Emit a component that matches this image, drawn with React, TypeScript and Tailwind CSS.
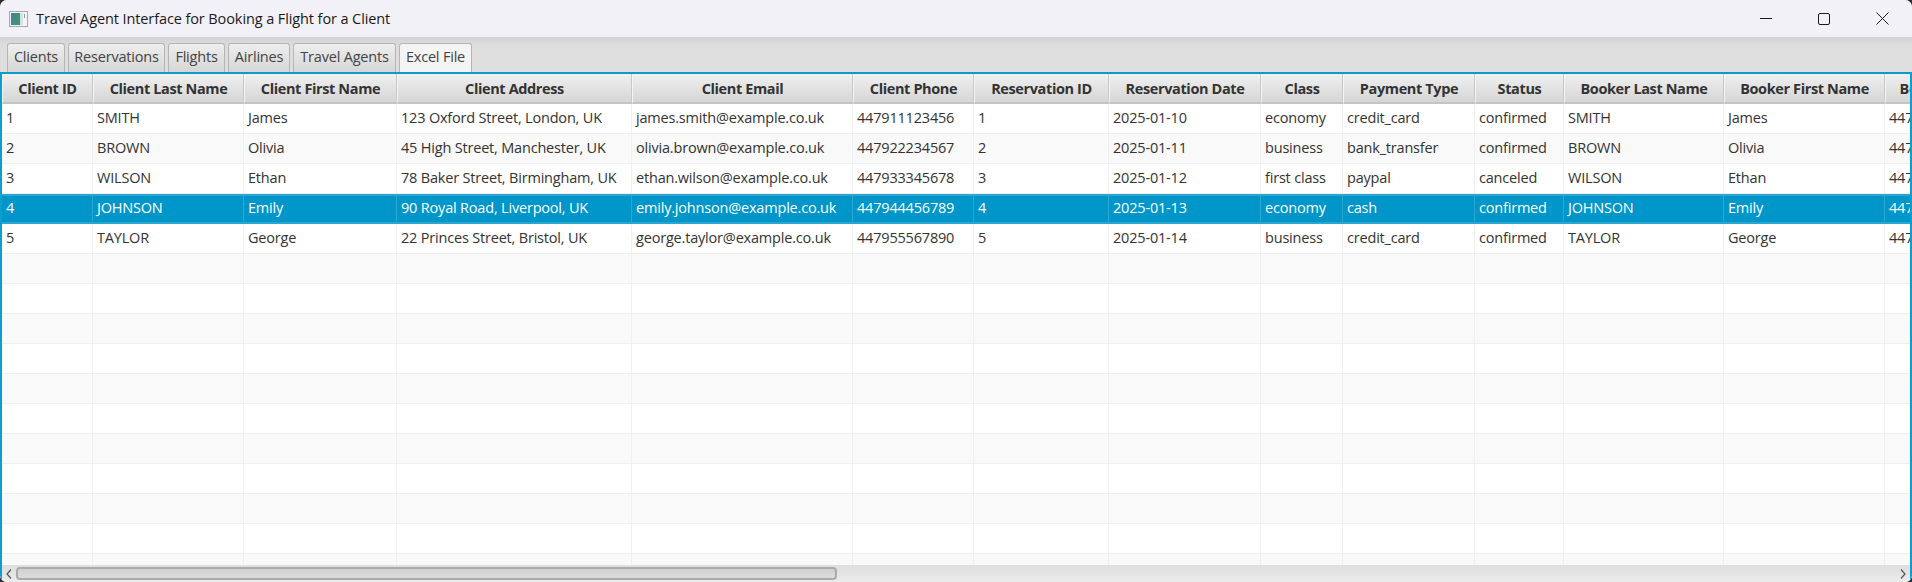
import React from "react";

const headers = ["Client ID","Client Last Name","Client First Name","Client Address","Client Email","Client Phone","Reservation ID","Reservation Date","Class","Payment Type","Status","Booker Last Name","Booker First Name","Booker Phone"];
const data = [
  ["1","SMITH","James","123 Oxford Street, London, UK","james.smith@example.co.uk","447911123456","1","2025-01-10","economy","credit_card","confirmed","SMITH","James","447911123456"],
  ["2","BROWN","Olivia","45 High Street, Manchester, UK","olivia.brown@example.co.uk","447922234567","2","2025-01-11","business","bank_transfer","confirmed","BROWN","Olivia","447922234567"],
  ["3","WILSON","Ethan","78 Baker Street, Birmingham, UK","ethan.wilson@example.co.uk","447933345678","3","2025-01-12","first class","paypal","canceled","WILSON","Ethan","447933345678"],
  ["4","JOHNSON","Emily","90 Royal Road, Liverpool, UK","emily.johnson@example.co.uk","447944456789","4","2025-01-13","economy","cash","confirmed","JOHNSON","Emily","447944456789"],
  ["5","TAYLOR","George","22 Princes Street, Bristol, UK","george.taylor@example.co.uk","447955567890","5","2025-01-14","business","credit_card","confirmed","TAYLOR","George","447955567890"],
];
const tabs = [
  ["Clients","w-[58px]"],["Reservations","w-[97px]"],["Flights","w-[57px]"],["Airlines","w-[62px]"],["Travel Agents","w-[103px]"],
];
const grid = "grid grid-cols-[91px_151px_153px_235px_221px_121px_135px_152px_82px_132px_89px_160px_161px_126px] w-max";
const rows = Array.from({ length: 16 }, (_, i) => data[i] ?? Array(14).fill(""));

function WinIcon() {
  return (
    <svg width="20" height="16" viewBox="0 0 20 16" className="shrink-0">
      <defs>
        <linearGradient id="g" x1="0" y1="0" x2="1" y2="1">
          <stop offset="0" stopColor="#4a7f98" />
          <stop offset="1" stopColor="#3a9a70" />
        </linearGradient>
      </defs>
      <rect x="0.5" y="0.5" width="18" height="15" fill="#f4f4f4" stroke="#a8a8a8" />
      <rect x="2" y="2" width="9" height="12" fill="url(#g)" />
      <rect x="11" y="2" width="3" height="12" fill="#d5e3df" />
      <rect x="15" y="3" width="1" height="4" fill="#7fa6ae" />
    </svg>
  );
}

export default function App() {
  return (
    <div className="w-[1912px] h-[582px] bg-[#2c2c2c] overflow-hidden font-['Open_Sans',sans-serif]">
      <div className="w-full h-full rounded-[7px] overflow-hidden flex flex-col bg-[#dcdcdc]">
        {/* title bar */}
        <div className="h-[37px] bg-[#f2f1f7] flex items-center pl-[9px] shrink-0">
          <WinIcon />
          <span className="ml-[7px] text-[14.5px] tracking-[-0.1px] text-[#1a1a1a] whitespace-nowrap">Travel Agent Interface for Booking a Flight for a Client</span>
          <div className="ml-auto flex items-center pr-[23px] gap-[46px]">
            <svg width="12" height="12" viewBox="0 0 12 12"><path d="M0 5.5H12" stroke="#1a1a1a" strokeWidth="1" /></svg>
            <svg width="12" height="12" viewBox="0 0 12 12"><rect x="0.5" y="0.5" width="11" height="11" rx="1.5" fill="none" stroke="#1a1a1a" /></svg>
            <svg width="13" height="13" viewBox="0 0 13 13"><path d="M0.5 0.5L12.5 12.5M12.5 0.5L0.5 12.5" stroke="#1a1a1a" strokeWidth="1" /></svg>
          </div>
        </div>
        {/* tabs */}
        <div className="h-[35px] shrink-0 flex items-end pl-[7px] gap-[3px] bg-gradient-to-b from-[#d2d2d2] to-[#dedede] to-[25%]">
          {tabs.map(([t, w]) => (
            <div key={t} className={`${w} h-[29px] pb-[2px] rounded-t-[3px] border border-b-0 border-[#b5b5b5] bg-gradient-to-b from-[#eeeeee] to-[#d6d6d6] text-[#444] text-[14.5px] tracking-[-0.2px] flex items-center justify-center whitespace-nowrap`}>{t}</div>
          ))}
          <div className="w-[73px] h-[29px] pb-[2px] rounded-t-[3px] border border-b-0 border-[#b5b5b5] bg-[#f4f4f4] text-[#444] text-[14.5px] tracking-[-0.2px] flex items-center justify-center whitespace-nowrap">Excel File</div>
        </div>
        {/* table */}
        <div className="flex-1 min-h-0 border-t-2 border-t-[#0d9bc9] border-x-2 border-x-[#0a9fd0] flex flex-col bg-white">
          <div className="flex-1 min-h-0 overflow-hidden">
            <div className={`${grid} h-[30px]`}>
              {headers.map((h) => (
                <div key={h} className="h-[30px] pt-[2px] border-r border-r-[#c8c8c8] border-b-2 border-b-[#c4c4c4] border-l border-l-[#f4f4f4] bg-gradient-to-b from-[#f0f0f0] to-[#d6d6d6] text-[#333] font-bold text-[14.5px] tracking-[-0.38px] flex items-center justify-center whitespace-nowrap overflow-hidden">{h}</div>
              ))}
            </div>
            {rows.map((r, i) => {
              const sel = i === 3;
              const bg = sel ? "bg-[#0096c9] text-white" : i % 2 === 0 ? "bg-white text-[#333]" : "bg-[#f9f9f9] text-[#333]";
              return (
                <div key={i} className={`${grid} h-[30px] ${bg} ${sel ? "border-y-2 border-y-[#2ba6d0]" : "border-b border-b-[#efefef]"}`}>
                  {r.map((c: string, j: number) => (
                    <div key={j} className={`h-full pl-[4px] pb-[2px] text-[14.5px] tracking-[-0.19px] flex items-center whitespace-nowrap overflow-hidden border-r ${sel ? "border-r-[#2ba6d0]" : "border-r-[#efefef]"}`}>{c}</div>
                  ))}
                </div>
              );
            })}
          </div>
          {/* scrollbar */}
          <div className="h-[17px] shrink-0 flex items-center bg-gradient-to-b from-[#dedede] to-[#ececec]">
            <div className="w-[14px] flex justify-center shrink-0">
              <svg width="6" height="10" viewBox="0 0 6 10"><path d="M5 0.5L1 5L5 9.5" fill="none" stroke="#555" strokeWidth="1.2" /></svg>
            </div>
            <div className="w-[821px] h-[13px] rounded-[4px] border-2 border-[#ababab] bg-gradient-to-b from-[#d0d0d0] to-[#dcdcdc]" />
            <div className="ml-auto w-[14px] flex justify-center shrink-0">
              <svg width="6" height="10" viewBox="0 0 6 10"><path d="M1 0.5L5 5L1 9.5" fill="none" stroke="#555" strokeWidth="1.2" /></svg>
            </div>
          </div>
        </div>
      </div>
    </div>
  );
}
